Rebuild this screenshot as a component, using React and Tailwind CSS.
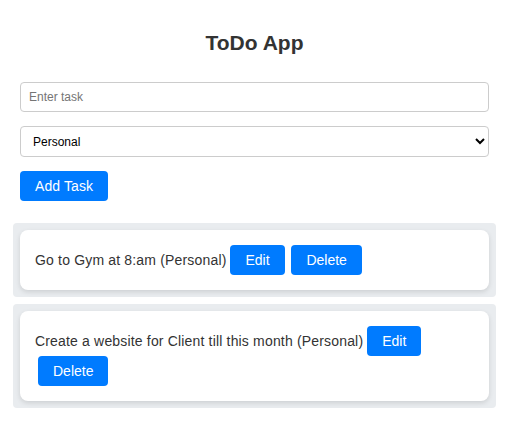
import { useState } from 'react';

const initialTasks = [
  { id: 1, text: 'Go to Gym at 8:am', category: 'Personal' },
  { id: 2, text: 'Create a website for Client till this month', category: 'Personal' },
];

const btn =
  'inline-block bg-[#007bff] text-white text-[14px] leading-4 px-[15px] py-[7px] rounded-[4px] align-baseline cursor-pointer';

export default function App() {
  const [tasks, setTasks] = useState(initialTasks);
  const [text, setText] = useState('');
  const [category, setCategory] = useState('Personal');

  const addTask = () => {
    if (!text.trim()) return;
    setTasks([...tasks, { id: Date.now(), text, category }]);
    setText('');
  };

  return (
    <div className="min-h-screen bg-white px-[20px] font-[Liberation_Sans,Arial,sans-serif]">
      <h2 className="pt-[31px] text-center text-[21px] leading-[24px] font-bold text-[#333]">ToDo App</h2>

      <input
        value={text}
        onChange={(e) => setText(e.target.value)}
        placeholder="Enter task"
        className="mt-[27px] block w-full h-[30px] px-[8px] text-[12px] border border-[#ccc] rounded-[4px] placeholder:text-[#757575] outline-none"
      />

      <select
        value={category}
        onChange={(e) => setCategory(e.target.value)}
        className="mt-[14px] block w-full h-[31px] px-[8px] text-[12px] text-black border border-[#ccc] rounded-[4px] bg-white"
      >
        <option>Personal</option>
        <option>Work</option>
        <option>Shopping</option>
      </select>

      <button onClick={addTask} className={`${btn} mt-[14px]`}>
        <span className="tracking-[0.1px]">Add Task</span>
      </button>

      <ul className="mt-[22px] -mx-[7px]">
        {tasks.map((t) => (
          <li key={t.id} className="bg-[#e9ecef] p-[7px] rounded-[4px] mb-[7px]">
            <div className="bg-white rounded-[8px] p-[15px] shadow-[0_2px_5px_rgba(0,0,0,0.12)] text-[14px] leading-[30px] text-[#333]">
              <span className="tracking-[0.17px]">{t.text} ({t.category})</span>{' '}
              <button className={btn}>Edit</button>{' '}
              <button className={`${btn} ml-[3px]`} onClick={() => setTasks(tasks.filter((x) => x.id !== t.id))}>
                Delete
              </button>
            </div>
          </li>
        ))}
      </ul>
    </div>
  );
}
